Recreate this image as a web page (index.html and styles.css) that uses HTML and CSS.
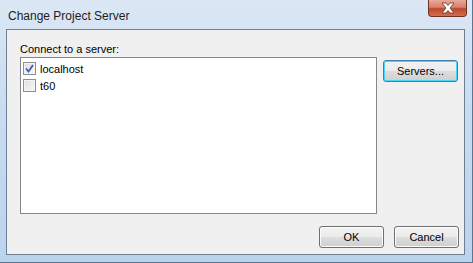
FILE: index.html
```html
<!DOCTYPE html>
<html lang="en">
<head>
    <meta charset="UTF-8">
    <title>Change Project Server</title>
    <link rel="stylesheet" href="styles.css">
</head>
<body>

    <!-- Dialog window -->
    <div class="window">
        <div class="titlebar">
            <span class="title">Change Project Server</span>
            <div class="close-btn">
                <svg width="18" height="12" viewBox="0 0 18 12">
                    <path d="M3 1 L7 1 L9 3.5 L11 1 L15 1 L11 6 L15 11 L11 11 L9 8.5 L7 11 L3 11 L7 6 Z"
                          fill="#fff" stroke="#5a3a30" stroke-width="0.8" stroke-linejoin="round"/>
                </svg>
            </div>
        </div>

        <div class="client">
            <div class="label">Connect to a server:</div>
            <div class="main-row">
                <div class="listbox">
                    <div class="item">
                        <span class="check checked">
                            <svg width="9" height="9" viewBox="0 0 9 9">
                                <path d="M1 4.5 L3.5 7.5 L8 1" fill="none" stroke="#3c5fb4" stroke-width="1.8"/>
                            </svg>
                        </span>
                        <span>localhost</span>
                    </div>
                    <div class="item">
                        <span class="check"></span>
                        <span>t60</span>
                    </div>
                </div>
                <button class="btn btn-default servers-btn">Servers...</button>
            </div>
            <div class="footer">
                <button class="btn">OK</button>
                <button class="btn">Cancel</button>
            </div>
        </div>
    </div>

</body>
</html>
```

FILE: styles.css
```css
body {
    margin: 0;
    width: 473px;
    height: 263px;
    overflow: hidden;
    font-family: "Liberation Sans", Arial, sans-serif;
}

.window {
    box-sizing: border-box;
    width: 473px;
    height: 263px;
    padding: 0 7px 7px 6px;
    background: linear-gradient(to bottom, #dbe7f4 0%, #c9dcf1 40%, #bcd3ee 100%);
    border-right: 1px solid #5b7593;
    border-bottom: 1px solid #5b7593;
    display: flex;
    flex-direction: column;
}

.titlebar {
    height: 29px;
    display: flex;
    align-items: flex-start;
    justify-content: space-between;
}

.title {
    font-family: "Liberation Sans", Arial, sans-serif;
    font-size: 12px;
    color: #1e1e1e;
    padding: 9px 0 0 2px;
    line-height: 14px;
}

.close-btn {
    width: 39px;
    height: 17px;
    margin-right: -2px;
    box-sizing: border-box;
    border: 1px solid #6e3226;
    border-top: none;
    border-radius: 0 0 4px 4px;
    background: linear-gradient(to bottom, #e9a99b 0%, #d9806b 45%, #c0442a 55%, #d2704c 100%);
    display: flex;
    align-items: center;
    justify-content: center;
}

.client {
    flex: 1;
    background: #f0f0f0;
    border: 1px solid #6f7f92;
    padding: 13px 5px 6px 13px;
    display: flex;
    flex-direction: column;
    font-size: 11px;
    color: #000;
}

.label {
    height: 13px;
    line-height: 13px;
    margin-bottom: 1px;
}

.main-row {
    display: flex;
    align-items: flex-start;
}

.listbox {
    box-sizing: border-box;
    width: 357px;
    height: 157px;
    background: #fff;
    border: 1px solid #828790;
    padding: 2px 0 0 2px;
}

.item {
    height: 17px;
    display: flex;
    align-items: center;
    gap: 4px;
}

.check {
    box-sizing: border-box;
    width: 13px;
    height: 13px;
    border: 1px solid #8f8f8f;
    background: linear-gradient(135deg, #dcdcdc, #fbfbfb);
    box-shadow: inset 0 0 0 1px #f4f4f4;
    display: flex;
    align-items: center;
    justify-content: center;
}

.btn {
    box-sizing: border-box;
    width: 65px;
    height: 22px;
    font-family: "Liberation Sans", Arial, sans-serif;
    font-size: 11px;
    color: #000;
    border: 1px solid #707070;
    border-radius: 3px;
    background: linear-gradient(to bottom, #f2f2f2 0%, #ebebeb 50%, #dddddd 51%, #cfcfcf 100%);
    box-shadow: inset 0 0 0 1px #fcfcfc;
    padding: 0;
}

.btn-default {
    border-color: #3c7fb1;
    box-shadow: inset 0 0 0 1px #48d5f8;
}

.servers-btn {
    width: 75px;
    margin: 3px 0 0 6px;
}

.footer {
    margin-top: auto;
    display: flex;
    justify-content: flex-end;
    gap: 10px;
}
```
